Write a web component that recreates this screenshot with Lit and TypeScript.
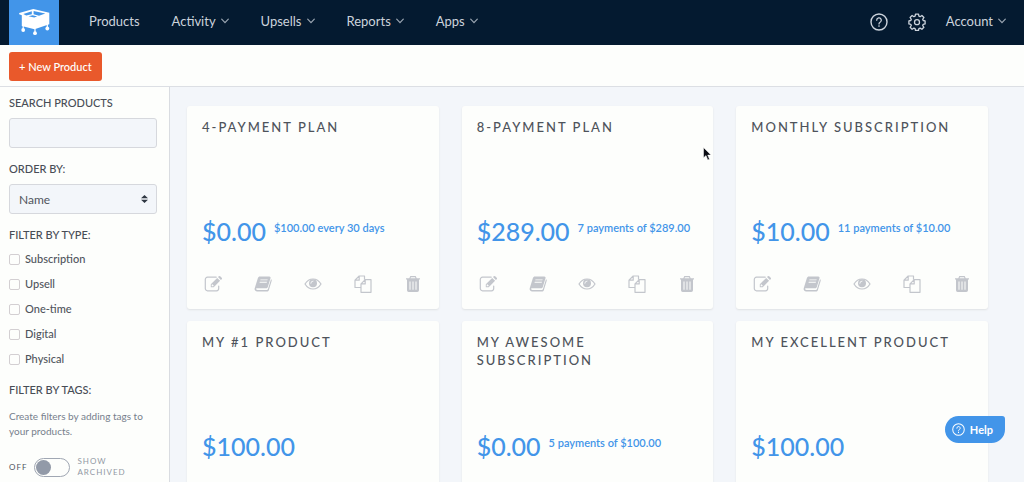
import { LitElement, html, css, svg, nothing } from "lit";
import { customElement, property, state } from "lit/decorators.js";

interface Product {
  name: string;
  price: string;
  terms?: string;
}

const PRODUCTS: Product[] = [
  { name: "4-Payment Plan", price: "$0.00", terms: "$100.00 every 30 days" },
  { name: "8-Payment Plan", price: "$289.00", terms: "7 payments of $289.00" },
  { name: "Monthly Subscription", price: "$10.00", terms: "11 payments of $10.00" },
  { name: "My #1 Product", price: "$100.00" },
  { name: "My Awesome Subscription", price: "$0.00", terms: "5 payments of $100.00" },
  { name: "My Excellent Product", price: "$100.00" },
];

const ICONS = {
  edit: svg`<path d="M12.200 2.200H3.500A2.200 2.200 0 0 0 1.300 4.400v9.200a2.200 2.200 0 0 0 2.200 2.200h9a2.200 2.200 0 0 0 2.200-2.200V11" fill="none" stroke="currentColor" stroke-width="1.200" stroke-linecap="round"/><path fill-rule="evenodd" d="M6.800 12.200V9.300l6.400-6.400 2.900 2.900-6.400 6.400zM7.700 9.800v1.500h1.500l.6-.6-1.500-1.500zM14 2.100l.8-.8a1 1 0 0 1 1.400 0l1.500 1.500a1 1 0 0 1 0 1.400l-.8.8z"/>`,
  book: svg`<path fill-rule="evenodd" d="M6 1.500h9.300c1 0 1.500.8 1.200 1.700L13.800 12c-.3.900-.9 1.300-1.800 1.300H3.200c-1 0-1.200.5-1 .9.200.6.700.8 1.400.8h9.200c.5 0 .9-.2 1.100-.8l3.100-10c.7.300.9.900.7 1.600l-2.800 9.200c-.3 1-1.100 1.600-2.100 1.600H3.400C1.500 16.600.2 15 .7 13.300L3.900 3.100C4.200 2.100 4.900 1.500 6 1.500zM6.500 4.400l-.3.900h7.200l.3-.9zM5.800 6.800l-.3.900h7.200l.3-.9z"/>`,
  eye: svg`<path d="M1 9c2-3.300 4.800-5 8-5s6 1.700 8 5c-2 3.300-4.800 5-8 5S3 12.300 1 9z" fill="none" stroke="currentColor" stroke-width="1.200"/><circle cx="9" cy="8.300" r="4"/><path d="M6.800 8.300A2.200 2.200 0 0 1 9 6.100" fill="none" stroke="#fff" stroke-width=".8" stroke-linecap="round"/>`,
  copy: svg`<g fill="none" stroke="currentColor" stroke-width="1.200" stroke-linejoin="round"><path d="M7 12.500H1V5.200L5.200 1H10.500V4.700M5.200 1v4.200H1"/><path d="M11.200 4.700H17v12.600H7V8.900zM11.200 4.700v4.200H7"/></g>`,
  trash: svg`<path fill-rule="evenodd" d="M6.300 1h5.400l1 2.300H16v1.300h-1V15c0 1.200-.7 2-1.700 2H4.700C3.700 17 3 16.200 3 15V4.600H2V3.300h3.300zM7 2.200l-.5 1.100h5L11 2.200zM5.500 6.500v8.200h1V6.500zM8.500 6.500v8.200h1V6.500zM11.500 6.500v8.200h1V6.500z"/>`,
};

const ACTIONS: Array<[keyof typeof ICONS, string]> = [
  ["edit", "Edit"],
  ["book", "Details"],
  ["eye", "Preview"],
  ["copy", "Duplicate"],
  ["trash", "Delete"],
];

const helpIcon = html`<svg viewBox="0 0 18 18" aria-hidden="true" fill="none" stroke="currentColor" stroke-linecap="round">
  <circle cx="9" cy="9" r="8" stroke-width="1.400" />
  <path d="M6.700 7.200a2.300 2.300 0 1 1 3.400 2c-.8.500-1.100.8-1.100 1.700" stroke-width="1.300" />
  <path d="M9 13v.1" stroke-width="1.600" />
</svg>`;

@customElement("top-nav")
export class TopNav extends LitElement {
  static styles = css`
    :host { display: block; background: #041a30; }
    .bar { display: flex; align-items: center; height: 45px; padding: 0 18px 0 9px; }
    .logo { display: grid; place-items: center; align-self: stretch; width: 50px; margin-right: 30px; background: #4295e9; color: #fff; }
    .logo svg { width: 32px; height: 28px; }
    .links { display: flex; gap: 32px; flex: 1; }
    a { color: #ccd3dc; text-decoration: none; font-size: 13px; line-height: 18px; }
    .link { display: flex; align-items: center; gap: 5px; padding-bottom: 4px; }
    .chevron { width: 8px; height: 6px; opacity: 0.75; }
    .tools { display: flex; align-items: center; gap: 20px; }
    .icon { display: flex; padding-bottom: 2px; }
    .icon svg { width: 18px; height: 18px; }
  `;

  private link(label: string, menu = true) {
    return html`<a class="link" href="#">${label}${menu
      ? html`<svg class="chevron" viewBox="0 0 8 6" aria-hidden="true"><path d="M.7 1.200 4 4.600l3.300-3.400" fill="none" stroke="currentColor" stroke-width="1.200" stroke-linecap="round" /></svg>`
      : nothing}</a>`;
  }

  render() {
    return html`<header class="bar">
      <a class="logo" href="#" aria-label="Home">
        <svg viewBox="0 0 32 28" aria-hidden="true" fill="currentColor">
          <path d="M1.200 4 15.300 0 31.300 3.800V15.300L16.500 20.300 3.800 17V6.300L1.200 5.300z" />
          <path d="M5.300 5.100 13.800 2.300V5.200L8.200 6.400zM15.600 2.100 27.300 4.600 21 6.700 15.600 5.200zM10.500 7.200 14.700 6.200 19.200 7.400 16.200 8.600z" fill="#4295e9" />
          <path d="M5.200 16.500v3.500M17 19.500v3.500M29.300 15v3.500" stroke="currentColor" stroke-width="1.200" />
          <circle cx="5.200" cy="21" r="1.900" /><circle cx="17" cy="24.200" r="1.900" /><circle cx="29.300" cy="19.500" r="1.900" />
        </svg>
      </a>
      <nav class="links">
        ${this.link("Products", false)}${this.link("Activity")}${this.link("Upsells")}${this.link("Reports")}${this.link("Apps")}
      </nav>
      <div class="tools">
        <a class="icon" href="#" aria-label="Help">${helpIcon}</a>
        <a class="icon" href="#" aria-label="Settings">
          <svg viewBox="0 0 18 18" aria-hidden="true" fill="none" stroke="currentColor" stroke-width="1.300" stroke-linejoin="round">
            <path d="M7.500 1.200h3l.4 2 1.200.5 1.800-1.200 2 2-1.200 1.800.5 1.200 1.900.4v3l-1.900.4-.5 1.200 1.200 1.800-2 2-1.800-1.200-1.200.5-.4 1.900h-3l-.4-1.900-1.200-.5-1.800 1.200-2-2 1.200-1.800-.5-1.200-1.900-.4v-3l1.900-.4.5-1.200-1.200-1.800 2-2 1.800 1.200 1.200-.5z" />
            <circle cx="9" cy="9.200" r="2.500" />
          </svg>
        </a>
        ${this.link("Account")}
      </div>
    </header>`;
  }
}

@customElement("filter-panel")
export class FilterPanel extends LitElement {
  @state() private archived = false;

  static styles = css`
    :host { display: block; box-sizing: border-box; background: #fdfefc; border-right: 1px solid #d9dce1; padding: 8px 12px 0 9px; color: #50555d; }
    .title { display: block; margin: 0; font-size: 11px; line-height: 16px; font-weight: 500; text-transform: uppercase; color: #484d56; }
    .field { box-sizing: border-box; display: block; width: 100%; height: 30px; margin: 0; border: 1px solid #d6d8dd; border-radius: 3px; background: #f3f6fa; color: #50555d; font: inherit; font-size: 12px; padding: 0 9px; appearance: none; }
    .group { margin-bottom: 13px; }
    .group .title { margin-bottom: 7px; }
    .select { display: grid; align-items: center; }
    .select > * { grid-area: 1 / 1; }
    .arrows { justify-self: end; width: 7px; height: 8px; margin-right: 9px; pointer-events: none; }
    .types { display: grid; gap: 9px; margin: 0 0 15px; padding: 0; border: 0; }
    .types .title { padding: 0; margin-bottom: 8px; }
    .check { display: flex; align-items: center; gap: 5px; font-size: 11px; line-height: 16px; font-weight: 500; }
    .check input { box-sizing: border-box; appearance: none; width: 11px; height: 11px; margin: 0; border: 1px solid #d3cfd2; border-radius: 2px; background: #fdfefc; }
    .check input:checked { background: #4295e9; }
    .note { margin: 11px 0 17px; font-size: 10px; line-height: 15px; color: #77808c; }
    .toggle { display: flex; align-items: center; gap: 7px; font-size: 8px; line-height: 11px; letter-spacing: 1px; color: #50555d; }
    .switch { appearance: none; box-sizing: border-box; width: 36px; height: 19px; margin: 0; padding: 1px; border: 1px solid #a0a7b3; border-radius: 10px; display: flex; }
    .switch::before { content: ""; width: 15px; height: 15px; border-radius: 50%; background: #929aa8; }
    .switch:checked { justify-content: flex-end; }
    .caption { width: 60px; color: #9299a4; }
  `;

  render() {
    return html`
      <div class="group">
        <label class="title" for="search">Search Products</label>
        <input class="field" id="search" type="search" />
      </div>
      <div class="group">
        <label class="title" for="order">Order by:</label>
        <div class="select">
          <select class="field" id="order"><option>Name</option><option>Price</option></select>
          <svg class="arrows" viewBox="0 0 7 8" aria-hidden="true" fill="#2f3742"><path d="M3.500 0 7 3.300H0zM3.500 8 0 4.700h7z" /></svg>
        </div>
      </div>
      <fieldset class="types">
        <legend class="title">Filter by type:</legend>
        ${["Subscription", "Upsell", "One-time", "Digital", "Physical"].map(
          (t) => html`<label class="check"><input type="checkbox" />${t}</label>`
        )}
      </fieldset>
      <h2 class="title">Filter by tags:</h2>
      <p class="note">Create filters by adding tags to your products.</p>
      <label class="toggle">
        <span>${this.archived ? "ON" : "OFF"}</span>
        <input class="switch" type="checkbox" role="switch" .checked=${this.archived}
          @change=${(e: Event) => (this.archived = (e.target as HTMLInputElement).checked)} />
        <span class="caption">SHOW ARCHIVED</span>
      </label>
    `;
  }
}

@customElement("product-card")
export class ProductCard extends LitElement {
  @property({ attribute: false }) product!: Product;

  static styles = css`
    :host { display: flex; flex-direction: column; box-sizing: border-box; min-height: 203px; padding: 12px 15px 16px; border-radius: 3px; background: #fdfefc; box-shadow: 0 1px 2px #dfe2e4; }
    .name { margin: 0; min-height: 95px; font-size: 13px; line-height: 18px; font-weight: 500; letter-spacing: 2px; text-transform: uppercase; color: #4e535b; }
    .cost { display: flex; gap: 8px; margin: 0; line-height: 36px; color: #4295e9; }
    .price { font-size: 25px; font-weight: 500; }
    .terms { font-size: 11px; line-height: 30px; font-weight: 600; }
    .actions { display: flex; justify-content: space-between; margin: auto 2px 0; }
    .action { display: flex; padding: 0; border: 0; background: none; color: #c3c6cc; cursor: pointer; }
    .action svg { width: 18px; height: 18px; fill: currentColor; }
  `;

  render() {
    const { name, price, terms } = this.product;
    return html`
      <h3 class="name">${name}</h3>
      <p class="cost">
        <span class="price">${price}</span>
        ${terms ? html`<span class="terms">${terms}</span>` : nothing}
      </p>
      <div class="actions">
        ${ACTIONS.map(
          ([icon, label]) => html`<button class="action" type="button" aria-label=${label}><svg viewBox="0 0 18 18" aria-hidden="true">${ICONS[icon]}</svg></button>`
        )}
      </div>
    `;
  }
}

@customElement("app-root")
export class AppRoot extends LitElement {
  static styles = css`
    :host { display: flex; flex-direction: column; height: 100vh; overflow: hidden; font-family: Lato, "Open Sans", sans-serif; background: #f3f6fa; }
    .toolbar { display: flex; padding: 7px 9px 5px; border-bottom: 1px solid #dcdfe4; background: #fdfefc; }
    .new { height: 29px; padding: 0 10px; border: 0; border-radius: 3px; background: #e9592b; color: #fff; font: inherit; font-size: 11px; font-weight: 500; }
    .body { display: grid; grid-template-columns: 170px 1fr; flex: 1; min-height: 0; }
    .main { overflow: hidden; padding: 19px 36px 12px 17px; }
    .grid { display: grid; grid-template-columns: repeat(3, 1fr); gap: 12px 23px; }
    .help { position: fixed; right: 19px; bottom: 39px; display: flex; align-items: center; gap: 5px; height: 27px; padding: 0 12px 0 7px; border: 0; border-radius: 14px 3px 14px 14px; background: #4295e9; color: #fff; font: inherit; font-size: 11px; font-weight: 700; }
    .help svg { width: 13px; height: 13px; }
    .pointer { position: absolute; left: 703px; top: 147px; width: 9px; height: 14px; pointer-events: none; }
  `;

  render() {
    return html`
      <top-nav></top-nav>
      <div class="toolbar"><button class="new" type="button">+ New Product</button></div>
      <div class="body">
        <filter-panel></filter-panel>
        <main class="main">
          <div class="grid">${PRODUCTS.map((p) => html`<product-card .product=${p}></product-card>`)}</div>
        </main>
      </div>
      <button class="help" type="button">${helpIcon}Help</button>
      <svg class="pointer" viewBox="0 0 9 14" aria-hidden="true"><path d="M.5.5v10.300L3 8.600l1.800 4.300 1.700-.7-1.800-4.100H8z" fill="#0b0d14" stroke="#fff" stroke-width=".5" /></svg>
    `;
  }
}
